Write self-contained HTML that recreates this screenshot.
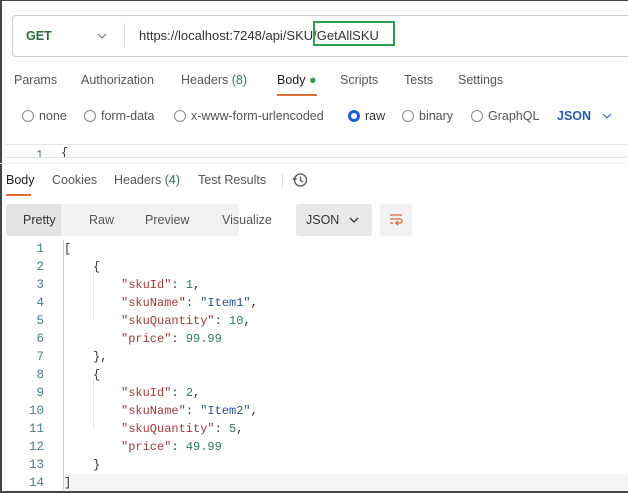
<!DOCTYPE html><html><head><style>
body{margin:0;width:628px;height:492px;overflow:hidden;background:#fff;font-family:"Liberation Sans",sans-serif;font-size:12.5px;color:#555;position:relative}
.frame{position:absolute;left:0;top:0;width:626px;height:490px;border:1px solid #444;border-right:none;border-left:2px solid #444;border-bottom:2px solid #444}
.a{position:absolute;white-space:nowrap}
.url{position:absolute;left:12px;top:15px;width:640px;height:40px;border:1px solid #ccc;border-radius:4px}
.code{font-family:"Liberation Mono",monospace;font-size:12px}
.ln{position:absolute;width:44px;text-align:right;color:#4a7a8a;font-family:"Liberation Mono",monospace;font-size:12.5px}
.k{color:#a33a3a}.s{color:#2a4f9a}.n{color:#2a7a5a}.p{color:#333}
.radio{display:inline-block;width:10px;height:10px;border:1px solid #888;border-radius:50%;vertical-align:-2px;margin-right:5px}
</style></head><body>
<div class="frame"></div>
<div class="url"></div>
<div class="a" style="left:26px;top:29px;color:#2a6a3a;font-weight:bold;font-size:12.5px">GET</div>
<svg class="a" style="left:97px;top:33px" width="10" height="6"><path d="M1 1l4 4 4-4" stroke="#666" fill="none"/></svg>
<div class="a" style="left:124px;top:23px;width:1px;height:24px;background:#ddd"></div>
<div class="a" style="left:139px;top:28px;color:#333;font-size:13px">https://localhost:7248/api/SKU/GetAllSKU</div>
<div class="a" style="left:313px;top:21px;width:82px;height:25px;border:2px solid #2aa050;box-sizing:border-box"></div>
<div class="a" style="left:14px;top:73px">Params</div>
<div class="a" style="left:81px;top:73px">Authorization</div>
<div class="a" style="left:181px;top:73px">Headers <span style="color:#2a7a4a">(8)</span></div>
<div class="a" style="left:277px;top:73px;color:#222">Body <span style="color:#2aa050">●</span></div>
<div class="a" style="left:277px;top:94px;width:40px;height:2px;background:#e06c3c"></div>
<div class="a" style="left:340px;top:73px">Scripts</div>
<div class="a" style="left:404px;top:73px">Tests</div>
<div class="a" style="left:458px;top:73px">Settings</div>
<div class="a" style="left:22px;top:109px"><span class="radio"></span>none</div>
<div class="a" style="left:84px;top:109px"><span class="radio"></span>form-data</div>
<div class="a" style="left:174px;top:109px"><span class="radio"></span>x-www-form-urlencoded</div>
<div class="a" style="left:348px;top:109px;color:#333"><span class="radio" style="border:3px solid #1a5fd0;width:6px;height:6px"></span>raw</div>
<div class="a" style="left:402px;top:109px"><span class="radio"></span>binary</div>
<div class="a" style="left:471px;top:109px"><span class="radio"></span>GraphQL</div>
<div class="a" style="left:557px;top:109px;color:#2a5ab0;font-weight:bold">JSON</div>
<svg class="a" style="left:602px;top:113px" width="10" height="6"><path d="M1 1l4 4 4-4" stroke="#2a5ab0" fill="none"/></svg>
<div class="a" style="left:6px;top:144px;width:630px;height:12px;border-top:1px solid #e4e4e4;border-bottom:1px solid #e4e4e4;overflow:hidden">
<div class="a code" style="left:30px;top:3px;color:#4a7a8a">1</div><div class="a code" style="left:55px;top:1px;color:#333">{</div></div>
<div class="a" style="left:0;top:163px;width:628px;height:1px;background:#eee"></div>
<div class="a" style="left:6px;top:173px;color:#222">Body</div>
<div class="a" style="left:6px;top:194px;width:25px;height:2px;background:#e06c3c"></div>
<div class="a" style="left:52px;top:173px">Cookies</div>
<div class="a" style="left:114px;top:173px">Headers <span style="color:#2a7a4a">(4)</span></div>
<div class="a" style="left:198px;top:173px">Test Results</div>
<div class="a" style="left:282px;top:174px;width:1px;height:14px;background:#ddd"></div>
<svg class="a" style="left:292px;top:172px" width="16" height="16" viewBox="0 0 16 16"><circle cx="8.5" cy="8" r="6" stroke="#555" fill="none" stroke-width="1.3"/><path d="M8.5 4.5v4l2.5 1.5M1 6l1.5 2 2-1.5" stroke="#555" fill="none" stroke-width="1.3"/></svg>
<div class="a" style="left:6px;top:204px;width:233px;height:32px;background:#f2f2f2;border-radius:3px"></div>
<div class="a" style="left:6px;top:204px;width:55px;height:32px;background:#e4e4e4;border-radius:3px 0 0 3px"></div>
<div class="a" style="left:23px;top:213px;color:#333">Pretty</div>
<div class="a" style="left:89px;top:213px">Raw</div>
<div class="a" style="left:145px;top:213px">Preview</div>
<div class="a" style="left:222px;top:213px">Visualize</div>
<div class="a" style="left:296px;top:204px;width:76px;height:32px;background:#e8e8e8;border-radius:3px"></div>
<div class="a" style="left:306px;top:213px;color:#333">JSON</div>
<svg class="a" style="left:349px;top:217px" width="10" height="6"><path d="M1 1l4 4 4-4" stroke="#333" fill="none" stroke-width="1.3"/></svg>
<div class="a" style="left:380px;top:204px;width:32px;height:32px;background:#f2f2f2;border-radius:3px"></div>
<svg class="a" style="left:388px;top:212px" width="16" height="16"><path d="M2 3h12M2 7h10a2 2 0 010 4H8M10 9l-2 2 2 2M2 11h3" stroke="#e06c3c" fill="none" stroke-width="1.3"/></svg>
<div class="a" style="left:63px;top:240px;width:1px;height:250px;background:#ccc"></div>
<div class="a" style="left:64px;top:474px;width:566px;height:17px;background:#f4f4f4"></div>
<div class="a" style="left:93px;top:270px;width:1px;height:50px;background:#e4e4e4"></div>
<div class="a" style="left:93px;top:378px;width:1px;height:50px;background:#e4e4e4"></div>
<div class="ln" style="left:0;top:242px">1</div><div class="ln" style="left:0;top:260px">2</div><div class="ln" style="left:0;top:278px">3</div><div class="ln" style="left:0;top:296px">4</div><div class="ln" style="left:0;top:314px">5</div><div class="ln" style="left:0;top:332px">6</div><div class="ln" style="left:0;top:350px">7</div><div class="ln" style="left:0;top:368px">8</div><div class="ln" style="left:0;top:386px">9</div><div class="ln" style="left:0;top:404px">10</div><div class="ln" style="left:0;top:422px">11</div><div class="ln" style="left:0;top:440px">12</div><div class="ln" style="left:0;top:458px">13</div><div class="ln" style="left:0;top:476px">14</div>
<div class="a code p" style="left:64px;top:242px">[</div>
<div class="a code p" style="left:93px;top:260px">{</div>
<div class="a code p" style="left:121px;top:278px"><span class="k">"skuId"</span>: <span class="n">1</span>,</div>
<div class="a code p" style="left:121px;top:296px"><span class="k">"skuName"</span>: <span class="s">"Item1"</span>,</div>
<div class="a code p" style="left:121px;top:314px"><span class="k">"skuQuantity"</span>: <span class="n">10</span>,</div>
<div class="a code p" style="left:121px;top:332px"><span class="k">"price"</span>: <span class="n">99.99</span></div>
<div class="a code p" style="left:93px;top:350px">},</div>
<div class="a code p" style="left:93px;top:368px">{</div>
<div class="a code p" style="left:121px;top:386px"><span class="k">"skuId"</span>: <span class="n">2</span>,</div>
<div class="a code p" style="left:121px;top:404px"><span class="k">"skuName"</span>: <span class="s">"Item2"</span>,</div>
<div class="a code p" style="left:121px;top:422px"><span class="k">"skuQuantity"</span>: <span class="n">5</span>,</div>
<div class="a code p" style="left:121px;top:440px"><span class="k">"price"</span>: <span class="n">49.99</span></div>
<div class="a code p" style="left:93px;top:458px">}</div>
<div class="a code p" style="left:64px;top:476px">]</div>
</body></html>
